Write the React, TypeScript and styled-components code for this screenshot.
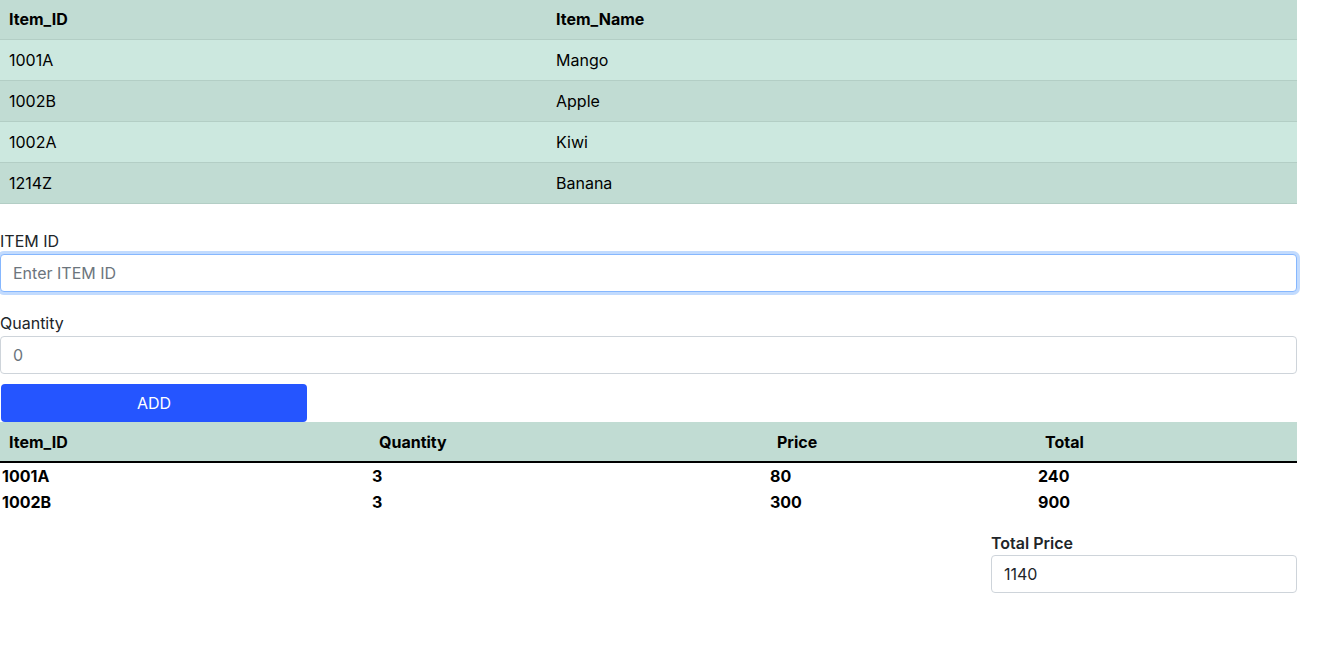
import styled, { createGlobalStyle } from "styled-components";

const GlobalStyle = createGlobalStyle`
  * { box-sizing: border-box; }
  body {
    margin: 0;
    background: #fff;
    font-family: Inter, "Liberation Sans", sans-serif;
    font-size: 16px;
    line-height: 1.5;
    color: #212529;
  }
`;

const Page = styled.div`
  width: 1297px;
`;

const ItemsTable = styled.table`
  width: 100%;
  border-collapse: collapse;
  color: #000;
`;

const HeadCell = styled.th<{ $w?: string }>`
  text-align: left;
  font-weight: 700;
  padding: 7px 8px 8px 9px;
  width: ${(p) => p.$w || "auto"};
  background: #c1dcd3;
  border-bottom: 1px solid #b3cec5;
`;

const BodyRow = styled.tr<{ $odd: boolean }>`
  background: ${(p) => (p.$odd ? "#cce8df" : "#c1dcd3")};
  border-bottom: 1px solid #b3cec5;
`;

const Cell = styled.td`
  padding: 8px 8px 8px 9px;
`;

const Form = styled.form`
  display: flex;
  flex-direction: column;
  padding-top: 25px;
`;

const Field = styled.div<{ $gap?: number }>`
  display: flex;
  flex-direction: column;
  margin-bottom: ${(p) => p.$gap ?? 0}px;
`;

const Label = styled.label<{ $bold?: boolean }>`
  color: #212529;
  font-weight: ${(p) => (p.$bold ? 600 : 400)};
  margin-bottom: ${(p) => (p.$bold ? 0 : 1)}px;
`;

const Input = styled.input<{ $focused?: boolean }>`
  display: block;
  width: 100%;
  height: 38px;
  padding: 6px 12px;
  font: inherit;
  color: #212529;
  background: #fff;
  border: 1px solid ${(p) => (p.$focused ? "#86b7fe" : "#ced4da")};
  border-radius: 4px;
  outline: none;
  box-shadow: ${(p) => (p.$focused ? "0 0 0 3px rgba(13,110,253,.25)" : "none")};
  &::placeholder {
    color: #6c757d;
  }
`;

const AddButton = styled.button`
  width: 306px;
  height: 38px;
  margin-left: 1px;
  border: none;
  border-radius: 4px;
  background: #2555ff;
  color: #fff;
  font: inherit;
  cursor: pointer;
`;

const CartTable = styled.table`
  width: 100%;
  border-collapse: collapse;
  color: #000;
  font-weight: 700;
`;

const CartHead = styled.th<{ $w: string }>`
  width: ${(p) => p.$w};
  text-align: left;
  padding: 8px 8px 7px 9px;
  background: #c1dcd3;
  border-bottom: 2px solid #000;
`;

const CartCell = styled.td`
  padding: 1px 1px 1px 2px;
`;

const Summary = styled.div`
  display: flex;
  justify-content: flex-end;
  padding-top: 16px;
`;

const SummaryField = styled.div`
  width: 306px;
  display: flex;
  flex-direction: column;
`;

const items = [
  { id: "1001A", name: "Mango" },
  { id: "1002B", name: "Apple" },
  { id: "1002A", name: "Kiwi" },
  { id: "1214Z", name: "Banana" },
];

const cart = [
  { id: "1001A", qty: 3, price: 80 },
  { id: "1002B", qty: 3, price: 300 },
];

const App = () => {
  const total = cart.reduce((s, c) => s + c.qty * c.price, 0);
  return (
    <Page>
      <GlobalStyle />
      <ItemsTable>
        <thead>
          <tr>
            <HeadCell $w="547px">Item_ID</HeadCell>
            <HeadCell>Item_Name</HeadCell>
          </tr>
        </thead>
        <tbody>
          {items.map((item, i) => (
            <BodyRow key={item.id} $odd={i % 2 === 0}>
              <Cell>{item.id}</Cell>
              <Cell>{item.name}</Cell>
            </BodyRow>
          ))}
        </tbody>
      </ItemsTable>

      <Form onSubmit={(e) => e.preventDefault()}>
        <Field $gap={19}>
          <Label>ITEM ID</Label>
          <Input $focused placeholder="Enter ITEM ID" />
        </Field>
        <Field $gap={10}>
          <Label>Quantity</Label>
          <Input placeholder="0" />
        </Field>
        <AddButton type="submit">ADD</AddButton>
      </Form>

      <CartTable>
        <thead>
          <tr>
            <CartHead $w="370px">Item_ID</CartHead>
            <CartHead $w="398px">Quantity</CartHead>
            <CartHead $w="268px">Price</CartHead>
            <CartHead $w="261px">Total</CartHead>
          </tr>
        </thead>
        <tbody>
          {cart.map((c) => (
            <tr key={c.id}>
              <CartCell>{c.id}</CartCell>
              <CartCell>{c.qty}</CartCell>
              <CartCell>{c.price}</CartCell>
              <CartCell>{c.qty * c.price}</CartCell>
            </tr>
          ))}
        </tbody>
      </CartTable>

      <Summary>
        <SummaryField>
          <Label $bold>Total Price</Label>
          <Input value={String(total)} readOnly />
        </SummaryField>
      </Summary>
    </Page>
  );
};

export default App;
